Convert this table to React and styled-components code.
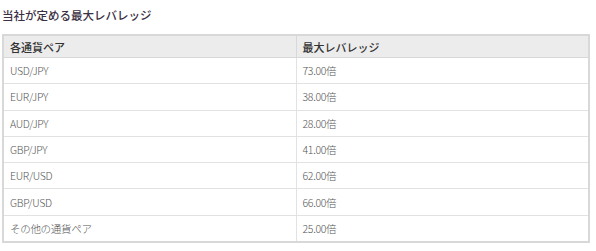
import React from 'react';
import styled, { createGlobalStyle } from 'styled-components';

const GlobalStyle = createGlobalStyle`
    body {
        margin: 0;
        background: #fff;
        font-family: "Noto Sans CJK JP", "Noto Sans", sans-serif;
    }
`

const Wrapper = styled.div`
    padding: 5px 6px 0 2px;
`

const Title = styled.h3`
    margin: 0 0 9px 0;
    font-size: 11.5px;
    font-weight: 500;
    line-height: 20px;
    color: #3b3044;
`

const Table = styled.table`
    width: 588px;
    border-collapse: collapse;
    border: 2px solid #d8d8d8;
    table-layout: fixed;
`

const HeadCell = styled.th`
    height: 21px;
    padding: 0 6px;
    background: #ececec;
    border: 1px solid #d8d8d8;
    text-align: left;
    font-size: 11px;
    font-weight: 500;
    color: #333;
`

const Cell = styled.td`
    height: 25.3px;
    padding: 0 6px;
    border: 1px solid #e2e2e2;
    font-size: 10.5px;
    font-weight: 300;
    color: #555;
    letter-spacing: -0.3px;
`

const rows = [
    ['USD/JPY', '73.00倍'],
    ['EUR/JPY', '38.00倍'],
    ['AUD/JPY', '28.00倍'],
    ['GBP/JPY', '41.00倍'],
    ['EUR/USD', '62.00倍'],
    ['GBP/USD', '66.00倍'],
    ['その他の通貨ペア', '25.00倍'],
]

const App = () => {
    return (
        <Wrapper>
            <GlobalStyle />
            <Title>当社が定める最大レバレッジ</Title>
            <Table>
                <thead>
                    <tr>
                        <HeadCell>各通貨ペア</HeadCell>
                        <HeadCell>最大レバレッジ</HeadCell>
                    </tr>
                </thead>
                <tbody>
                    {rows.map(([pair, lev]) => (
                        <tr key={pair}>
                            <Cell>{pair}</Cell>
                            <Cell>{lev}</Cell>
                        </tr>
                    ))}
                </tbody>
            </Table>
        </Wrapper>
    )
}

export default App
